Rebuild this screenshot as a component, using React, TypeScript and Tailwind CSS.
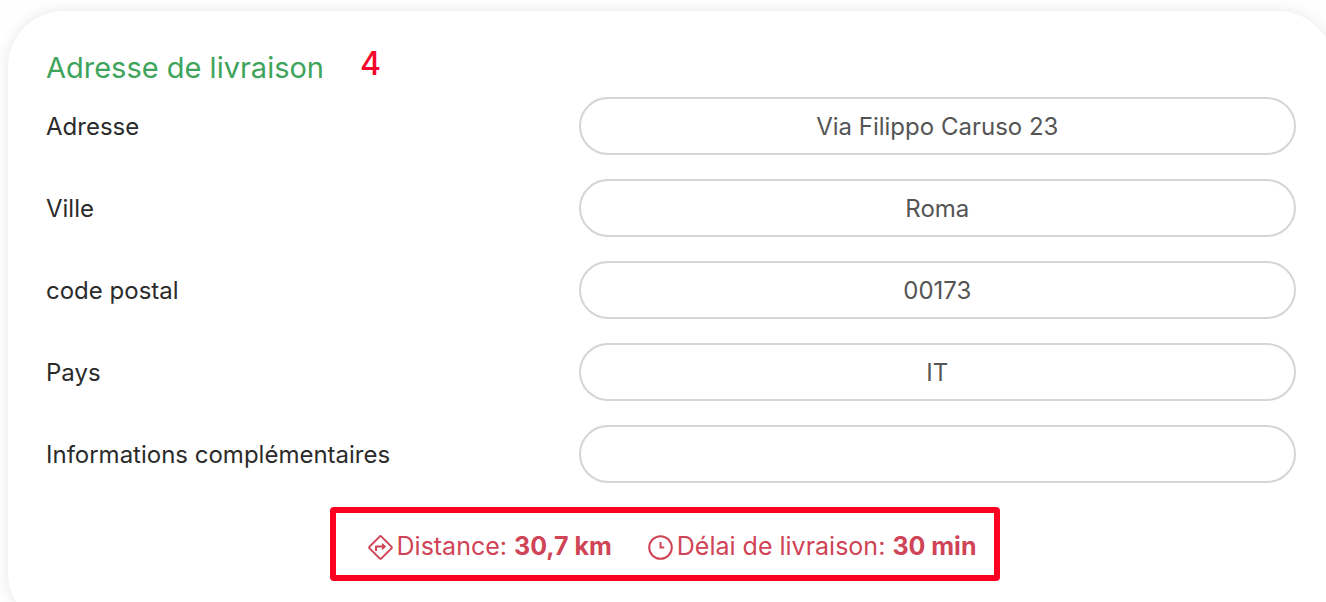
import React from 'react'

const fields = [
  { id: 'address', label: 'Adresse', value: 'Via Filippo Caruso 23' },
  { id: 'city', label: 'Ville', value: 'Roma' },
  { id: 'postcode', label: 'code postal', value: '00173' },
  { id: 'country', label: 'Pays', value: 'IT' },
  { id: 'notes', label: 'Informations complémentaires', value: '' },
]

const DirectionsIcon: React.FC = () => {
  return (
    <svg
      aria-hidden="true"
      className="size-[25px]"
      fill="none"
      stroke="currentColor"
      strokeLinejoin="round"
      strokeWidth="2"
      viewBox="0 0 25 25"
    >
      <path d="M11.6 1.6a1.3 1.3 0 0 1 1.8 0l10 10a1.3 1.3 0 0 1 0 1.8l-10 10a1.3 1.3 0 0 1-1.8 0l-10-10a1.3 1.3 0 0 1 0-1.8z" />
      <path d="M8 16v-4.4h7" />
      <path d="M14.4 8.8l3.4 2.8-3.4 2.8z" fill="currentColor" strokeWidth="1" />
    </svg>
  )
}

const ClockIcon: React.FC = () => {
  return (
    <svg
      aria-hidden="true"
      className="size-[25px]"
      fill="none"
      stroke="currentColor"
      strokeWidth="2"
      viewBox="0 0 25 25"
    >
      <circle cx="12.5" cy="12.5" r="11.3" />
      <path d="M12.5 7v5.6h3.8" />
    </svg>
  )
}

const Field: React.FC<{ id: string; label: string; value: string }> = ({ id, label, value }) => {
  return (
    <div className="grid grid-cols-[533fr_718fr] items-center">
      <label className="pt-0.5 text-2xl text-[#2b2b2b]" htmlFor={id}>
        {label}
      </label>
      <input
        className="h-[58px] w-full min-w-0 rounded-full border-2 border-[#d5d5d5] bg-white px-6 text-center text-2xl text-[#555555] outline-none"
        defaultValue={value}
        id={id}
        name={id}
        type="text"
      />
    </div>
  )
}

export default function App() {
  return (
    <main className="h-screen overflow-hidden bg-[#fefefe] pt-[11px] pl-2 font-['Inter',sans-serif]">
      <section className="-mr-2 rounded-[56px] bg-white px-[38px] pt-[39px] pb-12 shadow-[0_0_14px_rgba(0,0,0,0.09)]">
        <div className="mb-[11px] flex items-start gap-9">
          <h2 className="text-[29px] leading-9 text-[#3fa45b]">Adresse de livraison</h2>
          <span className="text-[32px] leading-7 font-medium text-[#f5052d]">4</span>
        </div>
        <form className="flex flex-col gap-6">
          {fields.map((field) => (
            <Field key={field.id} {...field} />
          ))}
          <div className="mr-3 flex h-[74px] items-center gap-9 self-center rounded border-6 border-[#fb0020] pt-1.5 pr-[18px] pl-8 text-[25px] whitespace-nowrap text-[#cf4456]">
            <p className="flex items-center gap-1">
              <DirectionsIcon />
              <span>
                Distance: <strong className="font-bold">30,7 km</strong>
              </span>
            </p>
            <p className="flex items-center gap-1">
              <ClockIcon />
              <span>
                Délai de livraison: <strong className="font-bold">30 min</strong>
              </span>
            </p>
          </div>
        </form>
      </section>
    </main>
  )
}
